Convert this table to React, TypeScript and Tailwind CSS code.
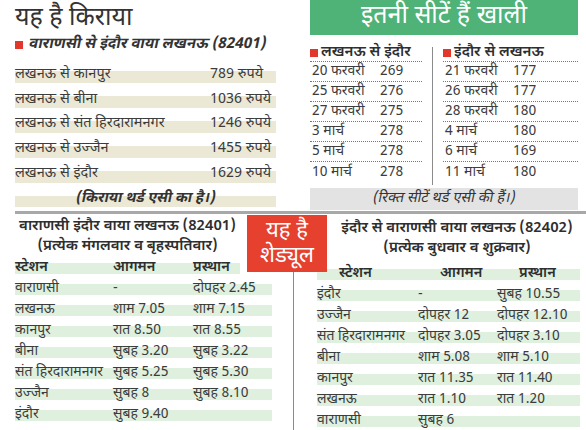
import React from 'react'

const font = { fontFamily: '"Noto Sans Devanagari", "Noto Sans", Lato, sans-serif' }

const fares = [
  ['लखनऊ से कानपुर', '789 रुपये'],
  ['लखनऊ से बीना', '1036 रुपये'],
  ['लखनऊ से संत हिरदारामनगर', '1246 रुपये'],
  ['लखनऊ से उज्जैन', '1455 रुपये'],
  ['लखनऊ से इंदौर', '1629 रुपये'],
]

const seatsA = [
  ['20 फरवरी', '269'],
  ['25 फरवरी', '276'],
  ['27 फरवरी', '275'],
  ['3 मार्च', '278'],
  ['5 मार्च', '278'],
  ['10 मार्च', '278'],
]

const seatsB = [
  ['21 फरवरी', '177'],
  ['26 फरवरी', '177'],
  ['28 फरवरी', '180'],
  ['4 मार्च', '180'],
  ['6 मार्च', '169'],
  ['11 मार्च', '180'],
]

const downTrain = [
  ['वाराणसी', '-', 'दोपहर 2.45'],
  ['लखनऊ', 'शाम 7.05', 'शाम 7.15'],
  ['कानपुर', 'रात 8.50', 'रात 8.55'],
  ['बीना', 'सुबह 3.20', 'सुबह 3.22'],
  ['संत हिरदारामनगर', 'सुबह 5.25', 'सुबह 5.30'],
  ['उज्जैन', 'सुबह 8', 'सुबह 8.10'],
  ['इंदौर', 'सुबह 9.40', ''],
]

const upTrain = [
  ['इंदौर', '-', 'सुबह 10.55'],
  ['उज्जैन', 'दोपहर 12', 'दोपहर 12.10'],
  ['संत हिरदारामनगर', 'दोपहर 3.05', 'दोपहर 3.10'],
  ['बीना', 'शाम 5.08', 'शाम 5.10'],
  ['कानपुर', 'रात 11.35', 'रात 11.40'],
  ['लखनऊ', 'रात 1.10', 'रात 1.20'],
  ['वाराणसी', 'सुबह 6', ''],
]

const beigeBar =
  'bg-[linear-gradient(to_bottom,transparent_36%,#ebe8d5_36%,#ebe8d5_82%,transparent_82%)]'
const greenBar =
  'bg-[linear-gradient(to_bottom,transparent_30%,#dff0df_30%,#dff0df_82%,transparent_82%)]'

const SeatCol = ({ title, rows }: { title: string; rows: string[][] }) => (
  <div className="flex flex-col">
    <div className="flex items-center gap-[3px] h-[17px] text-[15px] font-semibold text-[#2e2e2e] border-b border-dotted border-[#777]">
      <span className="w-[8px] h-[8px] bg-[#e2382b] inline-block" />
      {title}
    </div>
    {rows.map((r, i) => (
      <div
        key={r[0]}
        className={`flex h-[20px] items-center text-[14px] text-[#3c3c3c] pl-[2px] ${i < rows.length - 1 ? 'border-b border-dotted border-[#777]' : ''}`}
      >
        <span className="w-[68px]">{r[0]}</span>
        <span>{r[1]}</span>
      </div>
    ))}
  </div>
)

const Schedule = ({ rows, cols }: { rows: string[][]; cols: string }) => (
  <div className="flex flex-col">
    {rows.map((r) => (
      <div key={r[0]} className={`grid ${cols} h-[21px] items-center text-[14px] text-[#3c3c3c] ${greenBar}`}>
        <span>{r[0]}</span>
        <span>{r[1]}</span>
        <span>{r[2]}</span>
      </div>
    ))}
  </div>
)

export default function App() {
  return (
    <div className="w-[586px] h-[430px] bg-white overflow-hidden relative" style={font}>
      {/* top half */}
      <div className="flex h-[211px]">
        <div className="w-[300px] pl-[15px] pr-[24px] flex flex-col">
          <div className="text-[25px] leading-[34px] text-[#333] pt-[2px]">यह है किराया</div>
          <div className="flex items-center gap-[6px] text-[15px] leading-[18px] font-bold text-[#333] mb-[8px]">
            <span className="w-[8px] h-[8px] bg-[#e2382b] inline-block" />
            <span className="inline-block -skew-x-12">वाराणसी से इंदौर वाया लखनऊ (82401)</span>
          </div>
          {fares.map((f) => (
            <div key={f[0]} className={`flex h-[25.5px] items-center text-[14.5px] text-[#3c3c3c] ${beigeBar}`}>
              <span className="w-[195px]">{f[0]}</span>
              <span>{f[1]}</span>
            </div>
          ))}
          <div className={`h-[25px] flex items-center justify-center text-[14.5px] font-bold text-[#333] ${beigeBar}`}>
            <span className="inline-block -skew-x-12">(किराया थर्ड एसी का है।)</span>
          </div>
        </div>

        <div className="flex-1 flex flex-col pl-[10px] pr-[8px]">
          <div className="h-[35px] bg-[#4fb277] flex items-center justify-center text-white text-[25px]">
            इतनी सीटें हैं खाली
          </div>
          <div className="flex mt-[10px]">
            <div className="w-[112px]">
              <SeatCol title="लखनऊ से इंदौर" rows={seatsA} />
            </div>
            <div className="w-[21px] flex justify-center">
              <div className="w-[1.5px] h-[138px] bg-[#8a8a8a] mt-[2px]" />
            </div>
            <div className="flex-1">
              <SeatCol title="इंदौर से लखनऊ" rows={seatsB} />
            </div>
          </div>
          <div className="mt-auto mb-[1px] h-[22px] bg-[#e3e3e3] flex items-center justify-center text-[14.5px] text-[#333]">
            <span className="inline-block -skew-x-12">(रिक्त सीटें थर्ड एसी की हैं।)</span>
          </div>
        </div>
      </div>

      <div className="ml-[15px] h-[3px] bg-[#a8a8a8]" />

      {/* bottom half */}
      <div className="flex">
        <div className="w-[278px] pl-[15px] pr-[6px] flex flex-col">
          <div className="w-[225px] whitespace-nowrap text-center text-[15px] leading-[20px] text-[#2e2e2e] font-semibold mt-[3px]">
            वाराणसी इंदौर वाया लखनऊ (82401)
            <br />
            (प्रत्येक मंगलवार व बृहस्पतिवार)
          </div>
          <div className={`grid grid-cols-[98px_80px_1fr] w-[225px] h-[21px] items-center text-[14.5px] font-semibold text-[#2e2e2e] ${greenBar}`}>
            <span>स्टेशन</span>
            <span>आगमन</span>
            <span>प्रस्थान</span>
          </div>
          <Schedule rows={downTrain} cols="grid-cols-[98px_80px_1fr]" />
        </div>

        <div className="flex-1 flex flex-col">
          <div className="ml-[50px] whitespace-nowrap text-center text-[15px] leading-[20px] text-[#2e2e2e] font-semibold mt-[5px]">
            इंदौर से वाराणसी वाया लखनऊ (82402)
            <br />
            (प्रत्येक बुधवार व शुक्रवार)
          </div>
          <div className="ml-[15px] mt-[4px] border-l-[1.5px] border-[#8a8a8a] pl-[23px] pr-[6px] flex flex-col">
            <div className={`grid grid-cols-[101px_79px_1fr] h-[21px] items-center text-[14.5px] font-semibold text-[#2e2e2e] pl-[22px] ${greenBar}`}>
              <span>स्टेशन</span>
              <span>आगमन</span>
              <span>प्रस्थान</span>
            </div>
            <Schedule rows={upTrain} cols="grid-cols-[101px_79px_1fr]" />
          </div>
        </div>

        <div className="absolute left-[247px] top-[215px] w-[80px] h-[57px] bg-[#e6412f] flex flex-col items-center justify-center text-white text-[22px] leading-[25px]">
          <span>यह है</span>
          <span>शेड्यूल</span>
        </div>
      </div>
    </div>
  )
}
